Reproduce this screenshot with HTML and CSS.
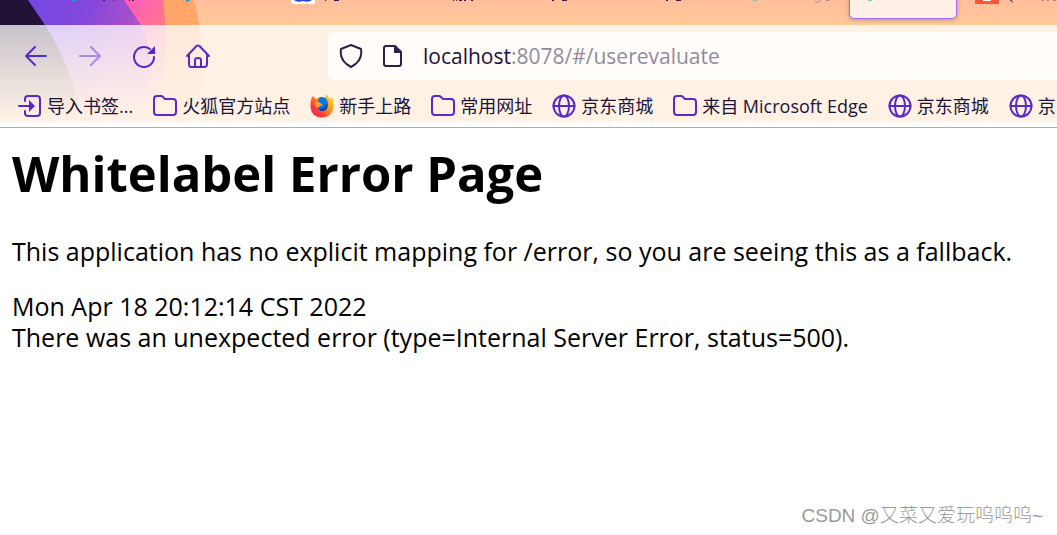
FILE: index.html
```html
<!DOCTYPE html>
<html lang="zh-CN">
<head>
<meta charset="utf-8">
<title>Whitelabel Error Page</title>
<link rel="stylesheet" href="styles.css">
</head>
<body>
<svg class="defs" aria-hidden="true">
  <symbol id="folder" viewBox="0 0 24 24"><path d="M1 18V5Q1 2 4 2H8Q9 2 10 3L12 5H20Q23 5 23 8V18Q23 21 20 21H4Q1 21 1 18Z"/></symbol>
  <symbol id="globe" viewBox="0 0 24 24"><circle cx="12" cy="12" r="10.5"/><ellipse cx="12" cy="12" rx="5" ry="10.5"/><path d="M1.5 12H22.500"/></symbol>
</svg>
<header class="browser">
  <svg class="theme" viewBox="0 0 1057 122" preserveAspectRatio="xMinYMin slice" aria-hidden="true">
    <defs>
      <linearGradient id="sky" x1="0" y1="0" x2="0" y2="25" gradientUnits="userSpaceOnUse"><stop stop-color="#ffbd9c"/><stop offset="1" stop-color="#ffca98"/></linearGradient>
      <linearGradient id="violet" x1="40" y1="10" x2="150" y2="50" gradientUnits="userSpaceOnUse"><stop stop-color="#7548e2"/><stop offset=".4" stop-color="#8647dc"/><stop offset="1" stop-color="#c057bd"/></linearGradient>
      <linearGradient id="pink" x1="130" y1="0" x2="165" y2="25" gradientUnits="userSpaceOnUse"><stop stop-color="#ff5cbc"/><stop offset="1" stop-color="#ff778a"/></linearGradient>
      <linearGradient id="fade" x1="0" y1="25" x2="0" y2="120" gradientUnits="userSpaceOnUse"><stop stop-color="#ffca98" stop-opacity="0"/><stop offset="1" stop-color="#ffca98"/></linearGradient>
    </defs>
    <path fill="url(#sky)" d="M0 0H1057V122H0Z"/>
    <path fill="#ffa668" d="M0 0H194Q207 45 198 122H0Z"/>
    <path fill="url(#pink)" d="M0 0H163Q171 60 155 122H0Z"/>
    <path fill="url(#violet)" d="M0 0H124L141 25Q151 45 151 75L147 122H0Z"/>
    <path fill="#231238" d="M0 0H28L45 25Q72 65 82 122H0Z"/>
    <path fill="url(#fade)" d="M0 25H1057V122H0Z"/>
  </svg>
  <nav class="tabs" aria-label="标签页">
    <svg class="tab-content" viewBox="0 0 1057 25" preserveAspectRatio="xMinYMin slice" aria-hidden="true">
      <path fill="#2698c6" d="M72 0H78L73 2ZM186 0H191L186 2Z"/>
      <path fill="#fff" d="M291 0H315V2Q315 4 313 4H293Q291 4 291 2Z"/><path fill="#2942dc" d="M294 0H312Q309 3 303 1Q297 3 294 0Z"/>
      <path stroke="#3b1b3e" stroke-width="1" d="M103 .5H105M114 0V1M129 .5H130M132 .5H134M325 .5H326M334 .5H339M453 .5H454M456 .5H457M459 .5H462M464 .5H466M471 .5H473M552 .5H554M562 .5H567M666 .5H668M676 .5H681"/>
      <path fill="#84bf99" d="M752 0H758Q755 2 752 0Z"/>
      <path stroke="#b18282" d="M815 2Q819 3 821 0M826 .5H829"/>
      <path fill="#ff5438" d="M975 0H999V4H975Z"/><path stroke="#fff" d="M983 .5H991"/>
      <path stroke="#3b1b3e" d="M1010 0L1013 2"/><path stroke="#b18282" d="M1042 .5H1044M1047 .5H1049M1053 .5H1056"/>
    </svg>
    <button class="active-tab" aria-label="当前标签页"><svg viewBox="0 0 108 29" aria-hidden="true"><path fill="#84d0a9" d="M15 9H22Q18 13 15 9Z"/></svg></button>
  </nav>
  <section class="toolbar">
    <div class="nav-buttons">
      <button aria-label="后退"><svg viewBox="0 0 24 24"><path d="M22 12H2M11 3L2 12L11 21"/></svg></button>
      <button aria-label="前进" disabled><svg viewBox="0 0 24 24"><path d="M2 12H22M13 3L22 12L13 21"/></svg></button>
      <button aria-label="刷新"><svg viewBox="0 0 24 24"><path d="M22 13A10 10 0 1 1 18 5"/><path class="solid" stroke="none" d="M23 2V10H15Z"/></svg></button>
      <button aria-label="主页"><svg viewBox="0 0 24 24"><path d="M1 12L10.500 2Q12 1 13.500 2L23 12M3 10V20Q3 23 5 23H18Q21 23 21 20V10M9 23V16Q9 14 12 14Q15 14 15 16V23"/></svg></button>
    </div>
    <div class="address">
      <svg viewBox="0 0 24 24" aria-hidden="true"><path d="M12 1L22 5Q24 17 12 23Q0 17 2 5Z"/></svg>
      <svg viewBox="0 0 24 24" aria-hidden="true"><path d="M3 4Q3 2 5 2H14L20 8V20Q20 22 18 22H5Q3 22 3 20Z"/><path class="solid" stroke="none" d="M13 2V9H20Z"/></svg>
      <a class="url" href="#/userevaluate"><span class="host">localhost</span>:8078/#/userevaluate</a>
    </div>
  </section>
  <nav class="bookmarks" aria-label="书签">
    <a href="#"><svg viewBox="0 0 24 24"><path d="M7 7V5Q7 2 10 2H19Q22 2 22 5V19Q22 22 19 22H10Q7 22 7 19V17M1 12H13"/><path class="solid" stroke="none" d="M11 6L17 12L11 18Z"/></svg>导入书签...</a>
    <a href="#"><svg><use href="#folder"/></svg>火狐官方站点</a>
    <a href="#"><svg class="firefox" viewBox="0 0 24 24"><defs><linearGradient id="fire" x1="1" y1="0" x2="0" y2="1"><stop stop-color="#ffe438"/><stop offset=".4" stop-color="#ff9a16"/><stop offset=".7" stop-color="#ff3c36"/><stop offset="1" stop-color="#ef166c"/></linearGradient></defs><path fill="url(#fire)" d="M3 2L6 5L10 3L15 4L16 0L20 5L22 3Q24 8 23.500 14Q22 23 12 23.500Q1 23 .5 13Q0 5 3 2Z"/><path fill="#0878e8" d="M10 3Q18 2 18 11Q17 17 11 17Q7 15 7 12H12L8 9Q8 5 10 3Z"/><path fill="#173f9e" d="M8 14Q14 17 17 9Q19 18 11 17Z"/><path fill="#ff9b20" d="M5 7L9 8L13 11L10 12L8 14Q4 12 5 7Z"/></svg>新手上路</a>
    <a href="#"><svg><use href="#folder"/></svg>常用网址</a>
    <a href="#"><svg><use href="#globe"/></svg>京东商城</a>
    <a href="#"><svg><use href="#folder"/></svg>来自 Microsoft Edge</a>
    <a href="#"><svg><use href="#globe"/></svg>京东商城</a>
    <a href="#"><svg><use href="#globe"/></svg>京</a>
  </nav>
</header>
<main class="page">
  <h1>Whitelabel Error Page</h1>
  <p>This application has no explicit mapping for /error, so you are seeing this as a fallback.</p>
  <div>Mon Apr 18 20:12:14 CST 2022</div>
  <div>There was an unexpected error (type=Internal Server Error, status=500).</div>
</main>
<footer class="watermark">CSDN @又菜又爱玩呜呜呜~</footer>
</body>
</html>
```
FILE: styles.css
```css
* { box-sizing: border-box; }
body {
  margin: 0;
  min-height: 100vh;
  display: flex;
  flex-direction: column;
  background: #fff;
  color: #000;
  font-family: "Open Sans", "Noto Sans CJK SC", sans-serif;
  overflow-x: hidden;
}
.defs { position: absolute; width: 0; height: 0; }
svg { fill: none; stroke: none; flex: none; }
.browser { position: relative; border-bottom: 1px solid #b0adb8; padding-bottom: 5px; }
.theme { position: absolute; top: 0; left: 0; width: 100%; height: 122px; }
.tabs { position: relative; height: 25px; }
.tab-content { position: absolute; top: 0; left: 0; width: 100%; height: 25px; }
.active-tab {
  position: absolute;
  top: -10px;
  left: 849px;
  width: 108px;
  height: 29px;
  border: 1px solid #a36cff;
  border-radius: 5px;
  background: #fff0e7;
  box-shadow: 0 1px 4px #80604080;
}
.active-tab svg { display: block; width: 100%; height: 100%; }
.toolbar, .bookmarks {
  position: relative;
  display: flex;
  align-items: center;
  background: #ffffffbf;
}
.toolbar { height: 61px; padding-left: 24px; }
.nav-buttons { display: flex; gap: 30px; width: 304px; flex: none; }
button { border: 0; background: none; padding: 0; }
.nav-buttons button { display: flex; }
.nav-buttons svg, .bookmarks svg { width: 24px; height: 24px; stroke: #592acb; stroke-width: 2; stroke-linejoin: round; stroke-linecap: round; }
.nav-buttons button:disabled { opacity: .45; }
.nav-buttons .solid, .bookmarks .solid { fill: #592acb; }
.address {
  flex: 1;
  height: 48px;
  display: flex;
  align-items: center;
  gap: 18px;
  padding-left: 11px;
  border-radius: 6px 0 0 6px;
  background: #fffcfa;
}
.address svg { width: 24px; height: 24px; stroke: #2c2145; stroke-width: 2; stroke-linejoin: round; }
.address .solid { fill: #2c2145; }
.url { color: #918aa0; font-size: 21px; line-height: 30px; text-decoration: none; white-space: nowrap; }
.host { color: #20123a; }
.bookmarks {
  height: 36px;
  padding: 4px 0 0 18px;
  gap: 20px;
}
.bookmarks a { display: flex; align-items: center; gap: 5px; flex: none; color: #20123a; font-size: 18px; line-height: 26px; text-decoration: none; white-space: nowrap; }
.bookmarks .firefox { stroke: none; }
.page { padding: 12px; font-size: 25px; line-height: 31px; }
h1 { margin: 0 0 30px; font-size: 49px; line-height: 66px; font-weight: 700; }
p { margin: 0 0 24px; }
.watermark { margin-top: auto; padding: 0 14px 5px; color: #999; text-align: right; font-family: "Liberation Sans", "Noto Sans CJK SC", sans-serif; font-size: 19px; line-height: 28px; font-weight: 300; }
```
